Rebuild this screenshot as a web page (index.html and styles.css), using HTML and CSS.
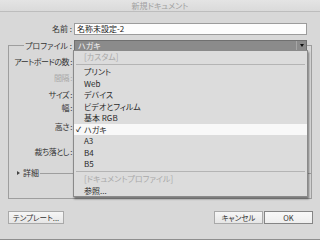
FILE: index.html
```html
<!DOCTYPE html>
<html lang="ja">
<head>
    <meta charset="UTF-8">
    <title>新規ドキュメント</title>
    <link rel="stylesheet" href="styles.css">
</head>
<body>
    <div class="window">
        <div class="titlebar">新規ドキュメント</div>

        <div class="content">
            <div class="name-row">
                <label class="label" for="docName">名前 :</label>
                <input class="text-input" id="docName" type="text" value="名称未設定-2">
            </div>

            <fieldset class="group">
                <legend class="group-head">
                    <span class="label">プロファイル :</span>
                    <div class="popup">
                        <span class="popup-value">ハガキ</span>
                        <span class="popup-arrow"></span>

                        <!-- open profile menu -->
                        <ul class="menu">
                            <li class="menu-item disabled">[カスタム]</li>
                            <li class="menu-sep"></li>
                            <li class="menu-item">プリント</li>
                            <li class="menu-item">Web</li>
                            <li class="menu-item">デバイス</li>
                            <li class="menu-item">ビデオとフィルム</li>
                            <li class="menu-item">基本 RGB</li>
                            <li class="menu-item checked">ハガキ</li>
                            <li class="menu-item">A3</li>
                            <li class="menu-item">B4</li>
                            <li class="menu-item">B5</li>
                            <li class="menu-sep"></li>
                            <li class="menu-item disabled">[ドキュメントプロファイル]</li>
                            <li class="menu-item">参照...</li>
                        </ul>
                    </div>
                </legend>

                <div class="group-rows">
                    <div class="row row-count"><span class="label">アートボードの数 :</span></div>
                    <div class="row row-spacing"><span class="label disabled">間隔 :</span></div>
                    <div class="row row-size"><span class="label">サイズ :</span></div>
                    <div class="row row-width"><span class="label">幅 :</span></div>
                    <div class="row row-height"><span class="label">高さ :</span></div>
                    <div class="row row-bleed"><span class="label">裁ち落とし :</span></div>
                    <div class="row details">
                        <span class="disclosure"></span>
                        <span class="details-text">詳細</span>
                        <span class="details-line"></span>
                    </div>
                </div>
            </fieldset>

            <div class="buttons">
                <button class="btn btn-template">テンプレート...</button>
                <span class="spacer"></span>
                <button class="btn btn-cancel">キャンセル</button>
                <button class="btn btn-ok">OK</button>
            </div>
        </div>
    </div>
</body>
</html>
```

FILE: styles.css
```css
* {
    box-sizing: border-box;
}
body {
    margin: 0;
    background: #d8d8d8;
    font-family: "Noto Sans CJK JP", "Liberation Sans", sans-serif;
    font-size: 8px;
    font-feature-settings: "palt";
    color: #2a2a2a;
}
.window {
    width: 320px;
    height: 240px;
    background: #d8d8d8;
    border-bottom: 1px solid #8e8e8e;
}
.titlebar {
    height: 12px;
    line-height: 11px;
    text-align: center;
    color: #a0a0a0;
    background: linear-gradient(#e4e4e4, #dadada);
    border-bottom: 1px solid #bdbdbd;
}
.content {
    padding-top: 11px;
}
.label {
    text-align: right;
    white-space: nowrap;
    color: #333;
}
.label.disabled {
    color: #a8a8a8;
}
.name-row {
    display: grid;
    grid-template-columns: 72px 233px;
    column-gap: 2px;
    height: 12px;
    line-height: 12px;
}
.text-input {
    height: 12px;
    padding: 0 2px;
    margin: 0;
    border: 1px solid #9c9c9c;
    background: #fdfdfd;
    font: inherit;
    color: #222;
}
.group {
    margin: 5px 8px 0 8px;
    padding: 0 0 19px 0;
    border: 1px solid #9e9e9e;
    min-width: 0;
}
.group-head {
    display: flex;
    margin-left: 15px;
    padding: 0;
    height: 11px;
    line-height: 11px;
}
.group-head .label {
    width: 48px;
    margin-right: 2px;
}
.popup {
    position: relative;
    width: 233px;
    height: 11px;
    background: #8b8b8b;
    border: 1px solid #707070;
    display: flex;
}
.popup-value {
    flex: 1;
    padding-left: 3px;
    line-height: 9px;
    color: #f4f4f4;
}
.popup-arrow {
    width: 10px;
    border-left: 1px solid #a6a6a6;
    position: relative;
}
.popup-arrow::after {
    content: "";
    position: absolute;
    left: 3px;
    top: 3px;
    border-left: 2px solid transparent;
    border-right: 2px solid transparent;
    border-top: 3px solid #111;
}
.menu {
    position: absolute;
    left: -2px;
    top: 9px;
    width: 235px;
    margin: 0;
    padding: 0;
    list-style: none;
    background: #dcdcdc;
    border: 1px solid #8a8a8a;
    box-shadow: 1px 2px 2px rgba(0, 0, 0, 0.45);
    z-index: 2;
}
.menu-item {
    height: 11.5px;
    line-height: 11.5px;
    padding-left: 10px;
    position: relative;
    color: #2a2a2a;
}
.menu-item.disabled {
    color: #a9a9a9;
}
.menu-item.checked {
    background: #f8f8f8;
}
.menu-item.checked::before {
    content: "✓";
    position: absolute;
    left: 2px;
    font-size: 7px;
    font-weight: bold;
}
.menu-sep {
    height: 1px;
    margin: 1px 2px 1.5px;
    background: #b4b4b4;
}
.group-rows {
    padding-top: 5px;
}
.group-rows .label {
    letter-spacing: -0.5px;
}
.row {
    display: grid;
    grid-template-columns: 63px;
    line-height: 12px;
}
.row-count { height: 16px; }
.row-spacing { height: 17px; }
.row-size { height: 13px; }
.row-width { height: 19px; }
.row-height { height: 25px; }
.row-bleed { height: 21px; }
.row.details {
    display: flex;
    align-items: center;
    height: 12px;
    padding-left: 8px;
}
.disclosure {
    width: 0;
    height: 0;
    border-top: 2.5px solid transparent;
    border-bottom: 2.5px solid transparent;
    border-left: 3px solid #444;
    margin-right: 3px;
}
.details-text {
    color: #333;
}
.details-line {
    flex: 1;
    height: 1px;
    margin-left: 1px;
    background: #9e9e9e;
}
.buttons {
    display: flex;
    margin-top: 12px;
    padding: 0 8px;
}
.spacer {
    flex: 1;
}
.btn {
    height: 13px;
    margin: 0;
    padding: 0;
    font: inherit;
    font-size: 7.5px;
    line-height: 11px;
    color: #333;
    background: linear-gradient(#f6f6f6, #e6e6e6);
    border: 1px solid #a9a9a9;
}
.btn-template {
    width: 56px;
}
.btn-cancel {
    width: 49px;
    margin-right: 1px;
}
.btn-ok {
    width: 49px;
    margin-right: -1px;
    border-color: #858585;
    background: linear-gradient(#f8f8f8, #eeeeee);
}
```
